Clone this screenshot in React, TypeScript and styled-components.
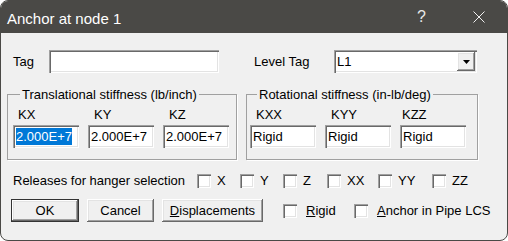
import styled, { createGlobalStyle } from "styled-components";

const GlobalStyle = createGlobalStyle`
  html, body {
    margin: 0;
    padding: 0;
    background: #ffffff;
  }
  * {
    box-sizing: border-box;
  }
`;

const sunken = `
  background: #ffffff;
  box-shadow: inset 1px 1px 0 #a0a0a0, inset 2px 2px 0 #696969,
    inset -1px -1px 0 #ffffff, inset -2px -2px 0 #e3e3e3;
`;

const raised = `
  background: #f0f0f0;
  box-shadow: inset -1px -1px 0 #696969, inset 1px 1px 0 #ffffff,
    inset -2px -2px 0 #a0a0a0, inset 2px 2px 0 #e3e3e3;
`;

const Window = styled.div`
  width: 508px;
  height: 241px;
  display: flex;
  flex-direction: column;
  background: #f0f0f0;
  border: 1px solid #4a4946;
  border-radius: 8px;
  overflow: hidden;
  font-family: "Liberation Sans", Arial, sans-serif;
  font-size: 13px;
  color: #000;
`;

const TitleBar = styled.div`
  height: 32px;
  flex: none;
  display: flex;
  align-items: center;
  background: #4a4946;
  color: #ffffff;
  padding-left: 6px;
`;

const Title = styled.span`
  font-size: 15px;
  padding-top: 2px;
`;

const TitleControls = styled.div`
  margin-left: auto;
  display: flex;
  height: 100%;
`;

const TitleButton = styled.div`
  width: 57px;
  display: flex;
  align-items: center;
  justify-content: center;
  color: #e8e8e8;
  font-size: 16px;
`;

const Body = styled.div`
  display: flex;
  flex-direction: column;
  padding: 17px 0 0 0;
`;

const Row = styled.div<{ $top?: number; $left?: number }>`
  display: flex;
  align-items: center;
  margin-top: ${(p) => p.$top ?? 0}px;
  padding-left: ${(p) => p.$left ?? 0}px;
`;

const Label = styled.span<{ $w?: number; $ml?: number }>`
  width: ${(p) => (p.$w ? `${p.$w}px` : "auto")};
  margin-left: ${(p) => p.$ml ?? 0}px;
  flex: none;
  white-space: nowrap;
`;

const TextBox = styled.div<{ $w: number }>`
  ${sunken}
  width: ${(p) => p.$w}px;
  height: 23px;
  flex: none;
  display: flex;
  align-items: center;
  padding: 0 3px;
  white-space: nowrap;
`;

const Selected = styled.span`
  background: #0078d7;
  color: #ffffff;
  padding: 1px 0;
`;

const DropButton = styled.div`
  ${raised}
  width: 18px;
  height: 19px;
  margin-left: auto;
  margin-right: -1px;
  display: flex;
  align-items: center;
  justify-content: center;
`;

const GroupRow = styled.div`
  display: flex;
  gap: 9px;
  margin-top: 14px;
  padding-left: 6px;
`;

const Group = styled.fieldset<{ $w: number; $pl: number }>`
  width: ${(p) => p.$w}px;
  margin: 0;
  padding: 0 0 11px ${(p) => p.$pl}px;
  border: 1px solid #a0a0a0;
  box-shadow: 1px 1px 0 #ffffff;
  display: grid;
  grid-template-columns: repeat(3, 66px);
  column-gap: 9px;
  row-gap: 3px;
`;

const Legend = styled.legend`
  padding: 0 2px;
  margin-left: 7px;
  line-height: 15px;
`;

const FieldLabel = styled.span<{ $pl: number }>`
  padding-left: ${(p) => p.$pl}px;
  line-height: 15px;
  margin-top: 5px;
`;

const CheckItem = styled.label<{ $w?: number; $gap: number; $ml?: number }>`
  display: flex;
  align-items: center;
  gap: ${(p) => p.$gap}px;
  width: ${(p) => (p.$w ? `${p.$w}px` : "auto")};
  margin-left: ${(p) => p.$ml ?? 0}px;
  flex: none;
`;

const Box = styled.span`
  ${sunken}
  width: 14px;
  height: 14px;
  flex: none;
`;

const Button = styled.div<{ $w: number; $default?: boolean }>`
  ${raised}
  width: ${(p) => p.$w}px;
  height: 23px;
  flex: none;
  display: flex;
  align-items: center;
  justify-content: center;
  border: ${(p) => (p.$default ? "1px solid #333" : "none")};
`;

const ButtonRow = styled.div`
  display: flex;
  align-items: center;
  gap: 8px;
  margin-top: 11px;
  padding-left: 10px;
`;

const CloseIcon = () => (
  <svg width="12" height="12" viewBox="0 0 12 12">
    <path d="M0.5 0.5 L11.5 11.5 M11.5 0.5 L0.5 11.5" stroke="#f0f0f0" strokeWidth="1" />
  </svg>
);

const Arrow = () => (
  <svg width="7" height="4" viewBox="0 0 7 4">
    <path d="M0 0 H7 L3.5 4 Z" fill="#000" />
  </svg>
);

const releases = [
  { t: "X", w: 43 },
  { t: "Y", w: 43 },
  { t: "Z", w: 44 },
  { t: "XX", w: 51 },
  { t: "YY", w: 54 },
  { t: "ZZ" },
];

export default function App() {
  return (
    <>
      <GlobalStyle />
      <Window>
        <TitleBar>
          <Title>Anchor at node 1</Title>
          <TitleControls>
            <TitleButton>?</TitleButton>
            <TitleButton>
              <CloseIcon />
            </TitleButton>
          </TitleControls>
        </TitleBar>
        <Body>
          <Row $left={12}>
            <Label $w={36}>Tag</Label>
            <TextBox $w={170} />
            <Label $w={80} $ml={35}>
              Level Tag
            </Label>
            <TextBox $w={143}>
              L1
              <DropButton>
                <Arrow />
              </DropButton>
            </TextBox>
          </Row>

          <GroupRow>
            <Group $w={230} $pl={5}>
              <Legend>Translational stiffness (lb/inch)</Legend>
              <FieldLabel $pl={5}>KX</FieldLabel>
              <FieldLabel $pl={6}>KY</FieldLabel>
              <FieldLabel $pl={6}>KZ</FieldLabel>
              <TextBox $w={66}>
                <Selected>2.000E+7</Selected>
              </TextBox>
              <TextBox $w={66}>2.000E+7</TextBox>
              <TextBox $w={66}>2.000E+7</TextBox>
            </Group>
            <Group $w={232} $pl={3}>
              <Legend>Rotational stiffness (in-lb/deg)</Legend>
              <FieldLabel $pl={6}>KXX</FieldLabel>
              <FieldLabel $pl={6}>KYY</FieldLabel>
              <FieldLabel $pl={2}>KZZ</FieldLabel>
              <TextBox $w={66}>Rigid</TextBox>
              <TextBox $w={66}>Rigid</TextBox>
              <TextBox $w={66}>Rigid</TextBox>
            </Group>
          </GroupRow>

          <Row $top={13} $left={12}>
            <Label $w={184}>Releases for hanger selection</Label>
            {releases.map((r) => (
              <CheckItem key={r.t} $w={r.w} $gap={6}>
                <Box />
                {r.t}
              </CheckItem>
            ))}
          </Row>

          <ButtonRow>
            <Button $w={68} $default>
              OK
            </Button>
            <Button $w={67}>Cancel</Button>
            <Button $w={101}>
              <span>
                <u>D</u>isplacements
              </span>
            </Button>
            <CheckItem $w={63} $gap={9} $ml={12}>
              <Box />
              <span>
                <u>R</u>igid
              </span>
            </CheckItem>
            <CheckItem $gap={9}>
              <Box />
              <span>
                <u>A</u>nchor in Pipe LCS
              </span>
            </CheckItem>
          </ButtonRow>
        </Body>
      </Window>
    </>
  );
}
